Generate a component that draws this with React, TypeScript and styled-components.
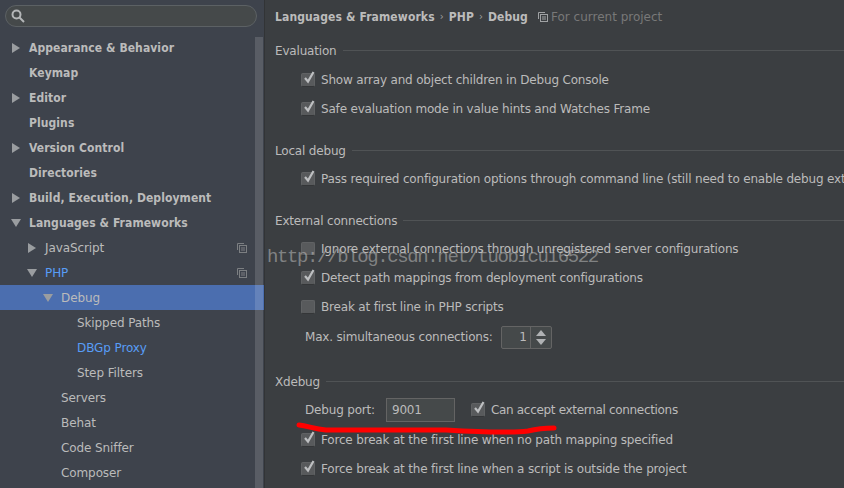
import React from "react";
import styled, { createGlobalStyle } from "styled-components";

const GlobalStyle = createGlobalStyle`
  html, body { margin: 0; padding: 0; background: #3b3e41; }
  body { font-family: "DejaVu Sans", sans-serif; overflow: hidden; }
`;

type TreeItem = {
  label: string;
  level: number;
  arrow?: "right" | "down";
  bold?: boolean;
  link?: boolean;
  selected?: boolean;
  shared?: boolean;
};

const tree: TreeItem[] = [
  { label: "Appearance & Behavior", level: 0, arrow: "right", bold: true },
  { label: "Keymap", level: 0, bold: true },
  { label: "Editor", level: 0, arrow: "right", bold: true },
  { label: "Plugins", level: 0, bold: true },
  { label: "Version Control", level: 0, arrow: "right", bold: true },
  { label: "Directories", level: 0, bold: true },
  { label: "Build, Execution, Deployment", level: 0, arrow: "right", bold: true },
  { label: "Languages & Frameworks", level: 0, arrow: "down", bold: true },
  { label: "JavaScript", level: 1, arrow: "right", shared: true },
  { label: "PHP", level: 1, arrow: "down", link: true, shared: true },
  { label: "Debug", level: 2, arrow: "down", selected: true },
  { label: "Skipped Paths", level: 3 },
  { label: "DBGp Proxy", level: 3, link: true },
  { label: "Step Filters", level: 3 },
  { label: "Servers", level: 2 },
  { label: "Behat", level: 2 },
  { label: "Code Sniffer", level: 2 },
  { label: "Composer", level: 2 },
];

const Page = styled.div`
  position: relative;
  display: flex;
  width: 844px;
  height: 488px;
  overflow: hidden;
  color: #bbbbbb;
  font-size: 12px;
`;

const Sidebar = styled.div`
  position: relative;
  flex: 0 0 264px;
  background: #3e434c;
  border-right: 1px solid #323436;
`;

const SearchBox = styled.div`
  display: flex;
  align-items: center;
  box-sizing: border-box;
  width: 252px;
  height: 22px;
  margin: 5px 0 8px 5px;
  padding-left: 5px;
  background: #45494a;
  border: 1px solid #5c6164;
  border-radius: 11px;
`;

const Scrollbar = styled.div`
  position: absolute;
  top: 37px;
  right: 1px;
  bottom: 0;
  width: 8px;
  background: rgba(255, 255, 255, 0.14);
`;

const Row = styled.div<{ $level: number; $selected?: boolean }>`
  display: flex;
  align-items: center;
  height: 25px;
  padding-left: ${({ $level }) => 11 + $level * 16}px;
  background: ${({ $selected }) => ($selected ? "#4b6eaf" : "transparent")};
`;

const ArrowSlot = styled.span`
  display: flex;
  align-items: center;
  flex: 0 0 18px;
  height: 10px;
`;

const RowLabel = styled.span<{ $bold?: boolean; $link?: boolean }>`
  flex: 1;
  font-family: ${({ $bold }) => ($bold ? '"DejaVu Sans Condensed", "DejaVu Sans", sans-serif' : '"DejaVu Sans", sans-serif')};
  font-size: 12px;
  font-weight: ${({ $bold }) => ($bold ? 700 : 400)};
  letter-spacing: ${({ $bold }) => ($bold ? "0.08px" : "-0.1px")};
  color: ${({ $link }) => ($link ? "#589df6" : "#bbbbbb")};
  white-space: nowrap;
`;

const SharedSlot = styled.span`
  display: flex;
  margin-right: 17px;
`;

const Main = styled.div`
  flex: 1;
  min-width: 0;
  padding: 9px 0 0 10px;
  background: #3b3e41;
  letter-spacing: -0.18px;
`;

const Breadcrumb = styled.div`
  display: flex;
  align-items: center;
  height: 15px;
  margin-bottom: 19px;
  white-space: nowrap;
  letter-spacing: 0;
`;

const Crumb = styled.span`
  font-family: "DejaVu Sans Condensed", "DejaVu Sans", sans-serif;
  font-weight: 700;
  letter-spacing: 0.12px;
  color: #bbbbbb;
`;

const Chevron = styled.span`
  margin: 0 5px;
  font-size: 10px;
  color: #a0a0a0;
`;

const Scope = styled.span`
  display: flex;
  align-items: center;
  gap: 3px;
  margin-left: 10px;
  color: #787878;
`;

const SectionTitle = styled.div<{ $gap: number; $after?: number }>`
  display: flex;
  align-items: center;
  gap: 6px;
  height: 16px;
  margin-top: ${({ $gap }) => $gap}px;
  margin-bottom: ${({ $after = 5 }) => $after}px;
  white-space: nowrap;
  &::after {
    content: "";
    flex: 1;
    height: 1px;
    margin-top: -2px;
    background: #505355;
  }
`;

const OptionRow = styled.div`
  display: flex;
  align-items: center;
  gap: 6px;
  height: 29px;
  padding-left: 26px;
  white-space: nowrap;
  overflow: hidden;
`;

const Box = styled.span`
  position: relative;
  display: flex;
  flex: 0 0 14px;
  box-sizing: border-box;
  height: 14px;
  background: #585a5c;
  border: 1px solid #606264;
  border-bottom-color: #343638;
  border-radius: 2px;
`;

const FieldRow = styled.div<{ $height: number }>`
  display: flex;
  align-items: center;
  height: ${({ $height }) => $height}px;
  padding-left: 30px;
  white-space: nowrap;
`;

const Spinner = styled.div`
  display: flex;
  margin-left: 8px;
  box-sizing: border-box;
  width: 51px;
  height: 23px;
  background: #45494a;
  border: 1px solid #646464;
  border-radius: 2px;
`;

const SpinnerValue = styled.div`
  flex: 1;
  padding-right: 3px;
  line-height: 21px;
  text-align: right;
  border-right: 1px solid #646464;
`;

const SpinnerArrows = styled.div`
  display: flex;
  flex: 0 0 20px;
  flex-direction: column;
  align-items: center;
  justify-content: center;
  gap: 3px;
`;

const PortInput = styled.div`
  box-sizing: border-box;
  width: 69px;
  height: 24px;
  margin: 0 16px 0 11px;
  padding-left: 5px;
  line-height: 22px;
  background: #45494a;
  border: 1px solid #646464;
`;

const PortOption = styled.span`
  display: flex;
  align-items: center;
  gap: 6px;
  letter-spacing: -0.32px;
`;

const Watermark = styled.div`
  position: absolute;
  left: 267px;
  top: 246px;
  font-family: "Liberation Mono", monospace;
  font-size: 19px;
  line-height: 22px;
  letter-spacing: -1.38px;
  color: rgba(190, 190, 190, 0.55);
  white-space: nowrap;
  pointer-events: none;
`;

const RedStroke = styled.svg`
  position: absolute;
  left: 296px;
  top: 422px;
`;

const Arrow = ({ dir }: { dir: "right" | "down" }) => (
  <svg width="10" height="10" viewBox="0 0 10 10">
    {dir === "right" ? (
      <polygon points="1,0 9,5 1,10" fill="#9a9da0" />
    ) : (
      <polygon points="0,1 10,1 5,9" fill="#9a9da0" />
    )}
  </svg>
);

const SharedIcon = ({ color = "#7c7f82" }: { color?: string }) => (
  <svg width="10" height="10" viewBox="0 0 10 10" fill="none" stroke={color} strokeWidth="1">
    <path d="M0.5 7V0.5H7" />
    <rect x="2.5" y="2.5" width="7" height="7" />
    <path d="M4 5h4M4 7h4" />
  </svg>
);

const Check = () => (
  <svg width="14" height="15" viewBox="0 0 14 15" style={{ position: "absolute", left: 0, top: -4 }}>
    <path d="M3 8l3 3.5L11.5 2" fill="none" stroke="#bdbfc1" strokeWidth="2.2" />
  </svg>
);

const Option = ({ checked, label }: { checked?: boolean; label: string }) => (
  <OptionRow>
    <Box>{checked && <Check />}</Box>
    {label}
  </OptionRow>
);

const App = () => (
  <Page>
    <GlobalStyle />
    <Sidebar>
      <SearchBox>
        <svg width="14" height="14" viewBox="0 0 14 14" fill="none" stroke="#b4b6b8" strokeWidth="2">
          <circle cx="5.5" cy="5.5" r="4" />
          <path d="M8.5 8.5L13 13" />
        </svg>
      </SearchBox>
      {tree.map((item) => (
        <Row key={item.label} $level={item.level} $selected={item.selected}>
          <ArrowSlot>{item.arrow && <Arrow dir={item.arrow} />}</ArrowSlot>
          <RowLabel $bold={item.bold} $link={item.link}>
            {item.label}
          </RowLabel>
          {item.shared && (
            <SharedSlot>
              <SharedIcon />
            </SharedSlot>
          )}
        </Row>
      ))}
      <Scrollbar />
    </Sidebar>
    <Main>
      <Breadcrumb>
        <Crumb>Languages &amp; Frameworks</Crumb>
        <Chevron>›</Chevron>
        <Crumb>PHP</Crumb>
        <Chevron>›</Chevron>
        <Crumb>Debug</Crumb>
        <Scope>
          <SharedIcon color="#a0a2a4" />
          For current project
        </Scope>
      </Breadcrumb>

      <SectionTitle $gap={0} $after={6}>Evaluation</SectionTitle>
      <Option checked label="Show array and object children in Debug Console" />
      <Option checked label="Safe evaluation mode in value hints and Watches Frame" />

      <SectionTitle $gap={20}>Local debug</SectionTitle>
      <Option checked label="Pass required configuration options through command line (still need to enable debug extension)" />

      <SectionTitle $gap={20}>External connections</SectionTitle>
      <Option label="Ignore external connections through unregistered server configurations" />
      <Option checked label="Detect path mappings from deployment configurations" />
      <Option label="Break at first line in PHP scripts" />
      <FieldRow $height={32}>
        Max. simultaneous connections:
        <Spinner>
          <SpinnerValue>1</SpinnerValue>
          <SpinnerArrows>
            <svg width="10" height="6" viewBox="0 0 10 6">
              <polygon points="5,0 10,6 0,6" fill="#b0b2b4" />
            </svg>
            <svg width="10" height="6" viewBox="0 0 10 6">
              <polygon points="0,0 10,0 5,6" fill="#b0b2b4" />
            </svg>
          </SpinnerArrows>
        </Spinner>
      </FieldRow>

      <SectionTitle $gap={21} $after={4}>Xdebug</SectionTitle>
      <FieldRow $height={31}>
        Debug port:
        <PortInput>9001</PortInput>
        <PortOption>
          <Box>
            <Check />
          </Box>
          Can accept external connections
        </PortOption>
      </FieldRow>
      <Option checked label="Force break at the first line when no path mapping specified" />
      <Option checked label="Force break at the first line when a script is outside the project" />
    </Main>
    <Watermark>http://blog.csdn.net/tuobicui6522</Watermark>
    <RedStroke width="262" height="20" viewBox="0 0 262 20">
      <path
        d="M3 3 C12 4 18 7 30 8 L150 8 C175 9.5 215 11 232 9 C240 7 250 6 258 6"
        fill="none"
        stroke="#ff0000"
        strokeWidth="5"
        strokeLinecap="round"
      />
    </RedStroke>
  </Page>
);

export default App;
